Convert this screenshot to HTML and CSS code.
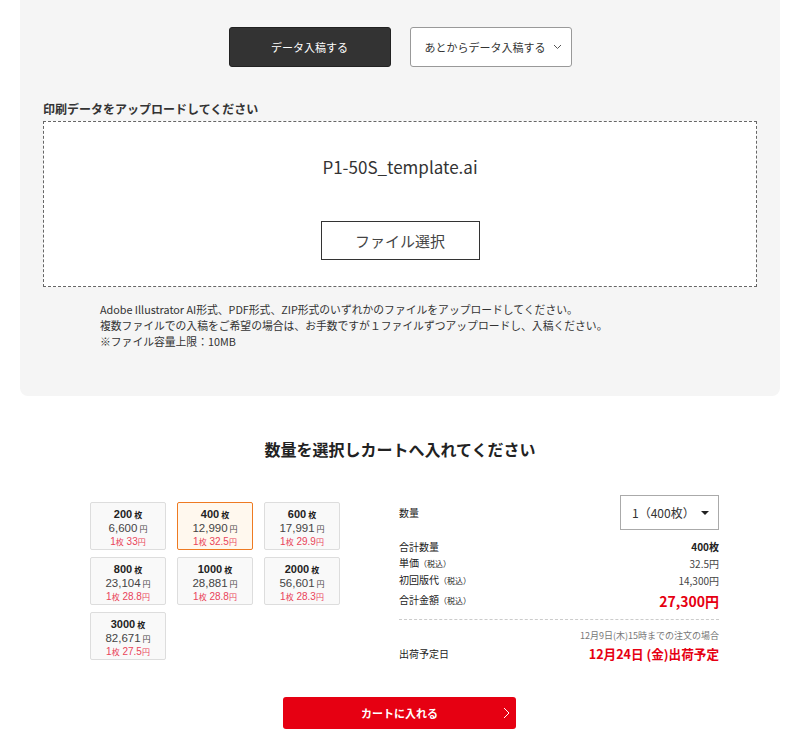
FILE: index.html
```html
<!DOCTYPE html>
<html lang="ja">
<head>
    <meta charset="UTF-8">
    <title>データ入稿</title>
    <link rel="stylesheet" href="styles.css">
</head>
<body>
    <div class="upload-panel">
        <div class="mode-buttons">
            <button class="mode-btn active">データ入稿する</button>
            <button class="mode-btn later">あとからデータ入稿する
                <svg width="9" height="6" viewBox="0 0 9 6"><path d="M1 1l3.5 3.5L8 1" fill="none" stroke="#555" stroke-width="1"/></svg>
            </button>
        </div>
        <h3 class="upload-label">印刷データをアップロードしてください</h3>
        <div class="drop-area">
            <p class="file-name">P1-50S_template.ai</p>
            <button class="file-btn">ファイル選択</button>
        </div>
        <div class="notes">
            <p>Adobe Illustrator AI形式、PDF形式、ZIP形式のいずれかのファイルをアップロードしてください。</p>
            <p>複数ファイルでの入稿をご希望の場合は、お手数ですが１ファイルずつアップロードし、入稿ください。</p>
            <p>※ファイル容量上限：10MB</p>
        </div>
    </div>

    <h2 class="order-title">数量を選択しカートへ入れてください</h2>

    <div class="order">
        <div class="price-grid">
            <div class="price-card">
                <div class="qty">200<small>枚</small></div>
                <div class="total">6,600<small>円</small></div>
                <div class="unit">1<small>枚</small> 33<small>円</small></div>
            </div>
            <div class="price-card selected">
                <div class="qty">400<small>枚</small></div>
                <div class="total">12,990<small>円</small></div>
                <div class="unit">1<small>枚</small> 32.5<small>円</small></div>
            </div>
            <div class="price-card">
                <div class="qty">600<small>枚</small></div>
                <div class="total">17,991<small>円</small></div>
                <div class="unit">1<small>枚</small> 29.9<small>円</small></div>
            </div>
            <div class="price-card">
                <div class="qty">800<small>枚</small></div>
                <div class="total">23,104<small>円</small></div>
                <div class="unit">1<small>枚</small> 28.8<small>円</small></div>
            </div>
            <div class="price-card">
                <div class="qty">1000<small>枚</small></div>
                <div class="total">28,881<small>円</small></div>
                <div class="unit">1<small>枚</small> 28.8<small>円</small></div>
            </div>
            <div class="price-card">
                <div class="qty">2000<small>枚</small></div>
                <div class="total">56,601<small>円</small></div>
                <div class="unit">1<small>枚</small> 28.3<small>円</small></div>
            </div>
            <div class="price-card">
                <div class="qty">3000<small>枚</small></div>
                <div class="total">82,671<small>円</small></div>
                <div class="unit">1<small>枚</small> 27.5<small>円</small></div>
            </div>
        </div>

        <div class="summary">
            <div class="row qty-row">
                <span class="label">数量</span>
                <div class="select">1（400枚）<span class="caret"></span></div>
            </div>
            <div class="row">
                <span class="label">合計数量</span>
                <span class="value bold">400枚</span>
            </div>
            <div class="row">
                <span class="label">単価<small>（税込）</small></span>
                <span class="value">32.5円</span>
            </div>
            <div class="row">
                <span class="label">初回版代<small>（税込）</small></span>
                <span class="value">14,300円</span>
            </div>
            <div class="row total-row">
                <span class="label">合計金額<small>（税込）</small></span>
                <span class="value big">27,300円</span>
            </div>
            <div class="ship">
                <p class="ship-note">12月9日(木)15時までの注文の場合</p>
                <div class="row">
                    <span class="label">出荷予定日</span>
                    <span class="value ship-date">12月24日 (金)出荷予定</span>
                </div>
            </div>
        </div>
    </div>

    <div class="cart">
        <button class="cart-btn">カートに入れる
            <svg class="chev" width="7" height="12" viewBox="0 0 7 12"><path d="M1 1l5 5-5 5" fill="none" stroke="#fff" stroke-width="1"/></svg>
        </button>
    </div>
</body>
</html>
```

FILE: styles.css
```css
body {
    margin: 0;
    background: #fff;
    color: #333;
    font-family: "Noto Sans CJK JP", "Noto Sans", sans-serif;
}

p {
    margin: 0;
}

button {
    font-family: inherit;
    cursor: pointer;
}

.upload-panel {
    margin: 0 20px;
    height: 396px;
    box-sizing: border-box;
    padding: 27px 23px 0;
    background: #f5f5f5;
    border-radius: 0 0 8px 8px;
}

.mode-buttons {
    display: flex;
    justify-content: center;
    gap: 19px;
}

.mode-btn {
    width: 162px;
    height: 40px;
    font-size: 11px;
    border-radius: 3px;
}

.mode-btn.active {
    background: #333;
    color: #fff;
    border: 1px solid #222;
}

.mode-btn.later {
    background: #fff;
    color: #333;
    border: 1px solid #999;
    display: flex;
    align-items: center;
    justify-content: flex-end;
    gap: 7px;
    padding: 0 9px 0 0;
}

.upload-label {
    margin: 34px 0 4px;
    font-size: 12px;
    line-height: 16px;
    font-weight: bold;
    color: #333;
}

.drop-area {
    height: 166px;
    box-sizing: border-box;
    background: #fff;
    border: 1px dashed #666;
    display: flex;
    flex-direction: column;
    align-items: center;
    padding-top: 34px;
}

.file-name {
    font-size: 17px;
    line-height: 22px;
    color: #333;
}

.file-btn {
    margin-top: 43px;
    width: 159px;
    height: 39px;
    background: #fff;
    border: 1px solid #333;
    color: #444;
    font-size: 15px;
}

.notes {
    padding: 14px 0 0 57px;
    font-size: 10.8px;
    line-height: 16px;
    color: #333;
}

.order-title {
    margin: 41px 0 0;
    text-align: center;
    font-size: 16px;
    line-height: 24px;
    font-weight: bold;
    color: #222;
}

.order {
    display: flex;
    margin-top: 34px;
    padding-left: 90px;
}

.price-grid {
    display: grid;
    grid-template-columns: repeat(3, 76px);
    grid-auto-rows: 48px;
    column-gap: 11px;
    row-gap: 7px;
    margin-top: 7px;
    align-content: start;
}

.price-card {
    box-sizing: border-box;
    background: #f9f9f9;
    border: 1px solid #ddd;
    border-radius: 2px;
    text-align: center;
    padding-top: 5px;
    font-family: "Liberation Sans", "Noto Sans CJK JP", sans-serif;
}

.price-card.selected {
    background: #fff8ee;
    border-color: #ee7a22;
}

.price-card small {
    font-size: 8px;
    margin-left: 2px;
}

.qty {
    font-size: 11px;
    line-height: 13px;
    font-weight: bold;
    color: #222;
}

.total {
    font-size: 11.5px;
    line-height: 13px;
    color: #444;
}

.unit {
    font-size: 10px;
    line-height: 12px;
    color: #e9445a;
}

.unit small {
    margin: 0;
}

.summary {
    width: 320px;
    margin-left: 59px;
}

.row {
    display: flex;
    justify-content: space-between;
    align-items: center;
    font-size: 10px;
    line-height: 16px;
}

.label {
    color: #222;
}

.label small {
    font-size: 8px;
}

.value {
    color: #444;
}

.value.bold {
    font-weight: bold;
    color: #222;
}

.qty-row {
    height: 35px;
    margin-bottom: 9px;
}

.select {
    width: 99px;
    height: 35px;
    box-sizing: border-box;
    border: 1px solid #aaa;
    background: #fff;
    display: flex;
    align-items: center;
    justify-content: space-between;
    padding: 0 9px 0 11px;
    font-size: 12px;
    color: #333;
}

.caret {
    border-left: 4px solid transparent;
    border-right: 4px solid transparent;
    border-top: 4px solid #222;
}

.total-row {
    margin-top: 3px;
    padding-bottom: 10px;
    border-bottom: 1px dashed #ccc;
}

.value.big {
    font-size: 14px;
    font-weight: bold;
    color: #e60012;
}

.ship {
    padding-top: 9px;
}

.ship-note {
    text-align: right;
    font-size: 9px;
    line-height: 14px;
    color: #777;
}

.ship .row {
    margin-top: 3px;
}

.ship-date {
    font-size: 12.6px;
    font-weight: bold;
    color: #e60012;
}

.cart {
    display: flex;
    justify-content: center;
    margin-top: 35px;
    padding-right: 1px;
}

.cart-btn {
    width: 233px;
    height: 32px;
    position: relative;
    background: #e60012;
    color: #fff;
    border: none;
    border-radius: 3px;
    font-size: 11px;
    font-weight: bold;
}

.chev {
    position: absolute;
    right: 6px;
    top: 10px;
}
```
